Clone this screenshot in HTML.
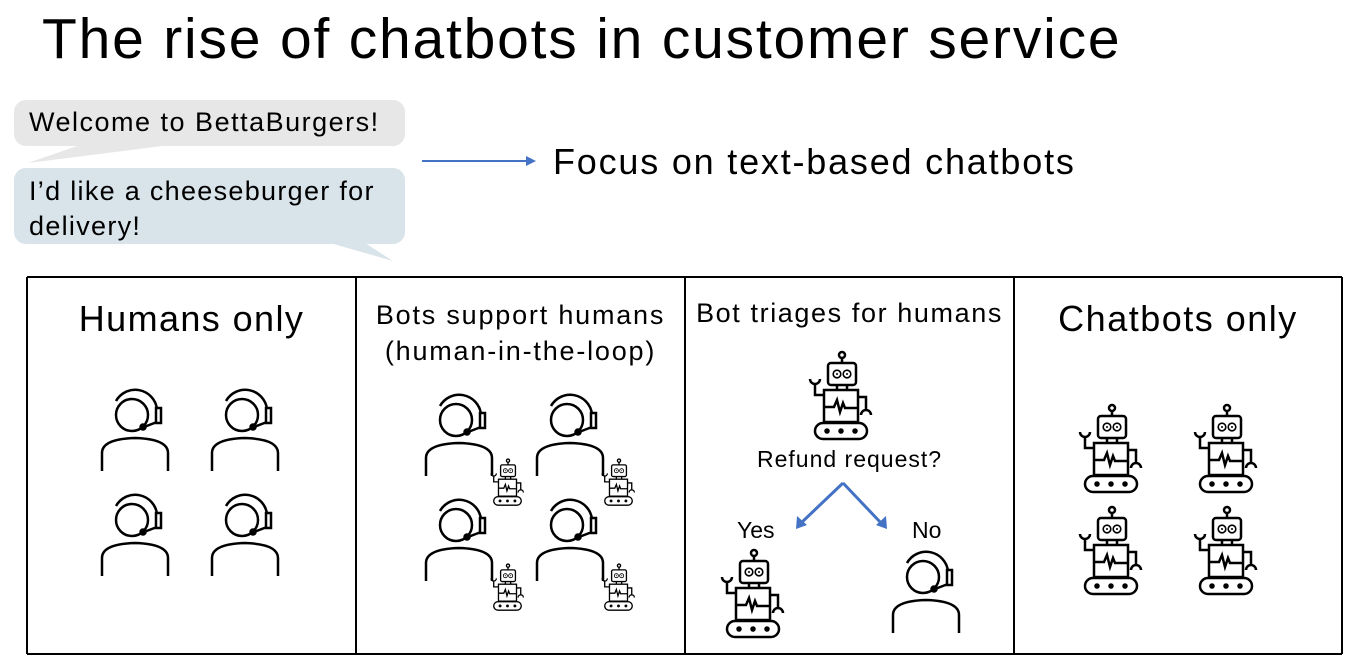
<!DOCTYPE html>
<html><head><meta charset="utf-8"><style>
body{margin:0;width:1356px;height:662px;background:#fff;font-family:"Liberation Sans",sans-serif;position:relative;overflow:hidden;color:#000}
.t{position:absolute;white-space:nowrap}
svg{position:absolute;left:0;top:0}
</style></head><body>
<svg width="1356" height="662" viewBox="0 0 1356 662">
<defs>
<g id="hum" fill="none" stroke="#000" stroke-width="2.5">
<circle cx="32" cy="24" r="16"/>
<path d="M16 10 A22 22 0 0 1 57 18"/>
<rect x="56" y="17" width="5" height="15" fill="none"/>
<path d="M57 31 L44 36"/>
<circle cx="43" cy="36" r="2.5" fill="#000"/>
<path d="M2 80 V62 Q2 48 35 47 Q68 48 68 62 V80"/>
</g>
<g id="bot" fill="none" stroke="#000" stroke-width="2.5">
<circle cx="34" cy="5" r="3"/><path d="M34 8 V13"/>
<rect x="20" y="13" width="28" height="22" rx="3"/>
<circle cx="29" cy="24" r="3.8" stroke-width="1.6"/><circle cx="39" cy="24" r="3.8" stroke-width="1.6"/>
<circle cx="29" cy="24" r="1" fill="#000" stroke="none"/><circle cx="39" cy="24" r="1" fill="#000" stroke="none"/>
<path d="M29 35 V40 M39 35 V40"/>
<rect x="16" y="40" width="34" height="32"/>
<path d="M16 57 H26 L29 50 L32 62 L35 53 L37 58 H50"/>
<path d="M16 45 H7 V34 M2 29 A5 5 0 0 0 12 29"/>
<path d="M50 47 H58 V60 M53 65 A5 5 0 0 1 63 65"/>
<rect x="7" y="73" width="52" height="16" rx="8"/>
<circle cx="19" cy="81" r="1.5" fill="#000"/><circle cx="33" cy="81" r="1.5" fill="#000"/><circle cx="47" cy="81" r="1.5" fill="#000"/>
</g>
</defs>
<rect x="14" y="100" width="391" height="46" rx="12" fill="#e7e7e7"/>
<path d="M80 145 L170 145 L28 163 Z" fill="#e7e7e7"/>
<rect x="14" y="168" width="391" height="76" rx="12" fill="#d9e4ea"/>
<path d="M330 243 L365 243 L393 261 Z" fill="#d9e4ea"/>
<path d="M422 161 H528" stroke="#4472c4" stroke-width="2"/>
<path d="M536 161 L526 156 L526 166 Z" fill="#4472c4"/>
<g stroke="#000" stroke-width="2" fill="none">
<path d="M27 277 H1342 M27 654 H1342 M27 277 V654 M356 277 V654 M685 277 V654 M1014 277 V654 M1342 277 V654"/>
</g>
<use href="#hum" x="100" y="391"/><use href="#hum" x="210" y="391"/>
<use href="#hum" x="100" y="496"/><use href="#hum" x="210" y="496"/>
<use href="#hum" x="424" y="396"/><use href="#hum" x="535" y="396"/>
<use href="#hum" x="424" y="501"/><use href="#hum" x="535" y="501"/>
<use href="#bot" transform="translate(490,458) scale(0.53)"/>
<use href="#bot" transform="translate(601,458) scale(0.53)"/>
<use href="#bot" transform="translate(490,563) scale(0.53)"/>
<use href="#bot" transform="translate(601,563) scale(0.53)"/>
<use href="#bot" x="808" y="350"/>
<use href="#bot" x="720" y="548"/>
<use href="#hum" x="891" y="553"/>
<path d="M843 483 L800 524 M843 483 L882 524" stroke="#4472c4" stroke-width="3" fill="none"/>
<path d="M796 529 L797 516 L807 525 Z" fill="#4472c4"/>
<path d="M887 529 L876 525 L886 516 Z" fill="#4472c4"/>
<use href="#bot" x="1078" y="403"/><use href="#bot" x="1193" y="403"/>
<use href="#bot" x="1078" y="505"/><use href="#bot" x="1193" y="505"/>
</svg>
<div class="t" style="left:42px;top:6px;font-size:57px;letter-spacing:1.8px">The rise of chatbots in customer service</div>
<div class="t" style="left:29px;top:107px;font-size:27px;letter-spacing:1.5px">Welcome to BettaBurgers!</div>
<div class="t" style="left:29px;top:174px;font-size:27px;line-height:35px;letter-spacing:1.3px">I’d like a cheeseburger for<br>delivery!</div>
<div class="t" style="left:553px;top:141px;font-size:36px;letter-spacing:1.8px">Focus on text-based chatbots</div>
<div class="t" style="left:27px;width:329px;text-align:center;top:298px;font-size:36px;letter-spacing:1.4px">Humans only</div>
<div class="t" style="left:356px;width:329px;text-align:center;top:297px;font-size:27px;line-height:36px;letter-spacing:1.8px">Bots support humans<br>(human-in-the-loop)</div>
<div class="t" style="left:685px;width:329px;text-align:center;top:298px;font-size:27px;letter-spacing:1.6px">Bot triages for humans</div>
<div class="t" style="left:1014px;width:328px;text-align:center;top:298px;font-size:36px;letter-spacing:1.5px">Chatbots only</div>
<div class="t" style="left:757px;top:446px;font-size:23px;letter-spacing:1px">Refund request?</div>
<div class="t" style="left:737px;top:517px;font-size:23px">Yes</div>
<div class="t" style="left:912px;top:517px;font-size:23px">No</div>
</body></html>
